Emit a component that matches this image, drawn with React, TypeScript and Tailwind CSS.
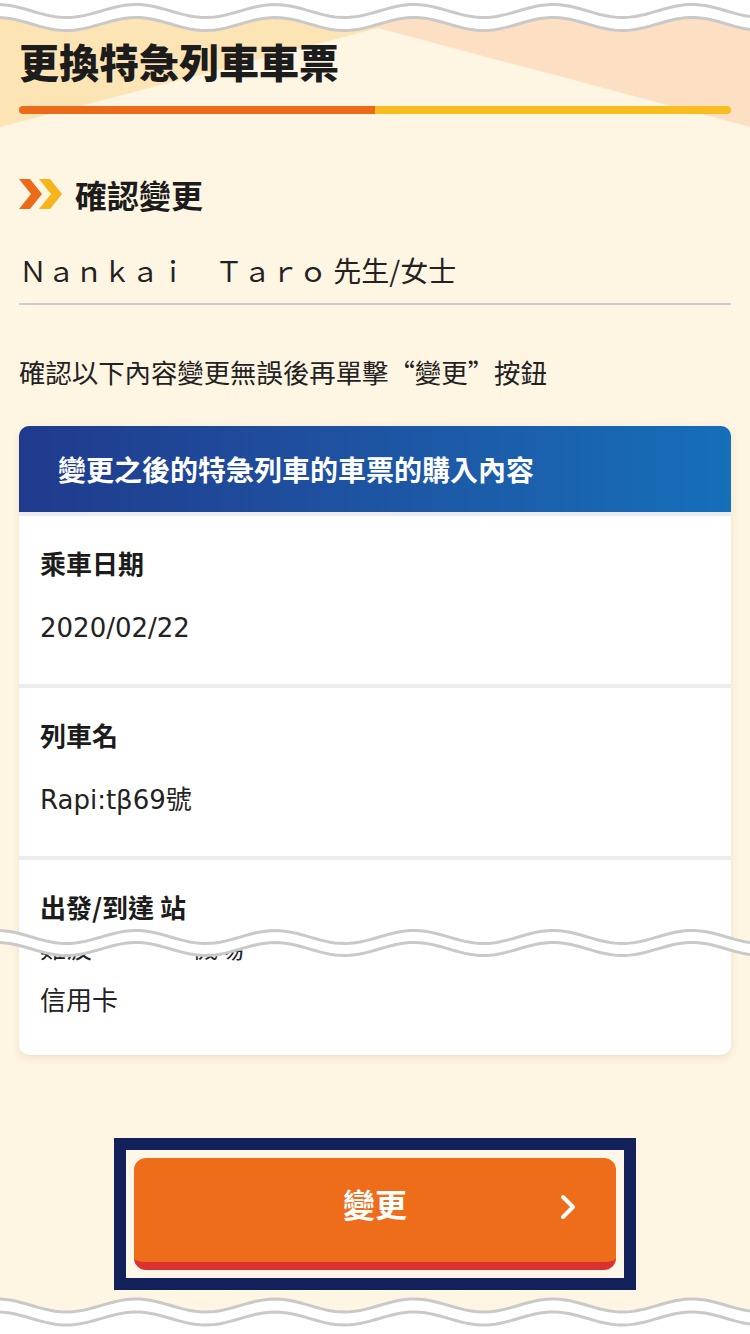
const P = 139;
const X0 = -3;
const A = 6.5;

function waveY(x: number, c: number) {
  return c - A * Math.cos((2 * Math.PI * (x - X0)) / P);
}

function line(c: number) {
  const p: [number, number][] = [];
  for (let x = 0; x <= 750; x += 5) p.push([x, waveY(x, c)]);
  return p;
}

function Wave({ className, h, c1, c2, mode }: { className: string; h: number; c1: number; c2: number; mode: "top" | "band" | "bottom" }) {
  const a = line(c1);
  const b = line(c2);
  const seg = (p: [number, number][]) => p.map(([x, y]) => `L${x} ${y.toFixed(2)}`).join(" ");
  const d = (p: [number, number][]) => p.map(([x, y], i) => `${i ? "L" : "M"}${x} ${y.toFixed(2)}`).join(" ");
  let fill = "";
  if (mode === "top") fill = `M0 0 L750 0 ${seg([...b].reverse())} Z`;
  if (mode === "band") fill = `${d(a)} ${seg([...b].reverse())} Z`;
  if (mode === "bottom") fill = `${d(a)} L750 ${h} L0 ${h} Z`;
  return (
    <svg className={className} width={750} height={h} viewBox={`0 0 750 ${h}`}>
      <path d={fill} fill="#ffffff" />
      <path d={d(a)} fill="none" stroke="#c9c9c9" strokeWidth={3} />
      <path d={d(b)} fill="none" stroke="#c9c9c9" strokeWidth={3} />
    </svg>
  );
}

const cjk = "font-['Noto_Sans_CJK_TC',sans-serif]";
const val = "font-['DejaVu_Sans','Noto_Sans_CJK_TC',sans-serif]";

function Row({ label, children }: { label: string; children: React.ReactNode }) {
  return (
    <div className="bg-white px-[21px] pt-[29px] pb-[38px]">
      <div className="text-[26px] leading-[36px] font-bold text-[#1c1c1c]">{label}</div>
      <div className={`mt-[29px] text-[26px] leading-[36px] text-[#222] ${val}`}>{children}</div>
    </div>
  );
}

export default function App() {
  return (
    <div className={`relative min-h-[1334px] w-[750px] overflow-hidden bg-[#fef5e2] text-[#1c1c1c] ${cjk}`}>
      <svg className="absolute left-0 top-0" width={750} height={140}>
        <polygon points="0,0 378,0 378,28 0,127" fill="#fde4b4" />
        <polygon points="378,0 750,0 750,127 378,28" fill="#fde0c3" />
      </svg>

      <div className="relative px-[19px] pt-[37px]">
        <h1 className="text-[40px] leading-[48px] font-black">更換特急列車車票</h1>
        <div className="mt-[21px] flex h-[8px] overflow-hidden rounded-full">
          <div className="w-1/2 bg-[#ec6b1b]" />
          <div className="flex-1 bg-[#f9bd1f]" />
        </div>

        <div className="mt-[60px] flex h-[40px] items-center gap-[12px]">
          <svg width={44} height={30} viewBox="0 0 44 30">
            <polygon points="0,0 11,0 23,15 11,30 0,30 12,15" fill="#ec6b1b" />
            <polygon points="20,0 31,0 43,15 31,30 20,30 32,15" fill="#f7b41c" />
          </svg>
          <h2 className="text-[32px] font-bold leading-[40px]">確認變更</h2>
        </div>

        <div className="mt-[36px] border-b-2 border-[#c8ccd3] pb-[13px] text-[28px] leading-[40px] text-[#222]">
          <span>Ｎａｎｋａｉ　Ｔａｒｏ</span> 先生/女士
        </div>

        <p className="mt-[49px] text-[26.4px] leading-[36px] text-[#222]">確認以下內容變更無誤後再單擊“變更”按鈕</p>

        <div className="mt-[36px] overflow-hidden rounded-[10px] bg-[#ececec] shadow-[0_3px_8px_rgba(120,90,40,0.12)]">
          <div className="flex h-[86px] items-center bg-gradient-to-r from-[#203a8c] to-[#156fb9] px-[39px]">
            <span className="text-[28px] font-bold text-white">變更之後的特急列車的車票的購入內容</span>
          </div>
          <div className="mt-[4px] flex flex-col gap-[4px]">
            <Row label="乘車日期">2020/02/22</Row>
            <Row label="列車名">Rapi:tβ69號</Row>
            <div className="bg-white px-[21px] pt-[29px] pb-[38px]">
              <div className="text-[26px] leading-[36px] font-bold">出發/到達 站</div>
              <div className="mt-[20px] h-[16px] overflow-hidden">
                <div className={`-mt-[16px] flex gap-[100px] text-[26px] leading-[36px] text-[#222] ${cjk}`}>
                  <span>難波</span>
                  <span>機場</span>
                </div>
              </div>
              <div className="mt-[20px] text-[26px] leading-[36px] text-[#222]">信用卡</div>
            </div>
          </div>
        </div>

        <div className="mx-auto mt-[83px] w-[522px] border-[12px] border-[#13215b] bg-[#fef7e8] p-[8px]">
          <button className="relative flex h-[112px] w-full items-center justify-center rounded-[12px] border-b-[8px] border-[#dc3131] bg-[#ed6d1b] pb-[14px]">
            <span className="text-[32px] font-bold text-white">變更</span>
            <svg className="absolute right-[40px] top-[36px]" width={16} height={26} viewBox="0 0 16 26">
              <polyline points="3,3 13,13 3,23" fill="none" stroke="#fff" strokeWidth={4} strokeLinecap="round" strokeLinejoin="round" />
            </svg>
          </button>
        </div>
      </div>

      <Wave className="absolute left-0 top-0" h={40} c1={11} c2={24} mode="top" />
      <Wave className="absolute left-0 top-[920px]" h={45} c1={17} c2={29} mode="band" />
      <Wave className="absolute left-0 top-[1290px]" h={44} c1={15.5} c2={28.5} mode="bottom" />
    </div>
  );
}
